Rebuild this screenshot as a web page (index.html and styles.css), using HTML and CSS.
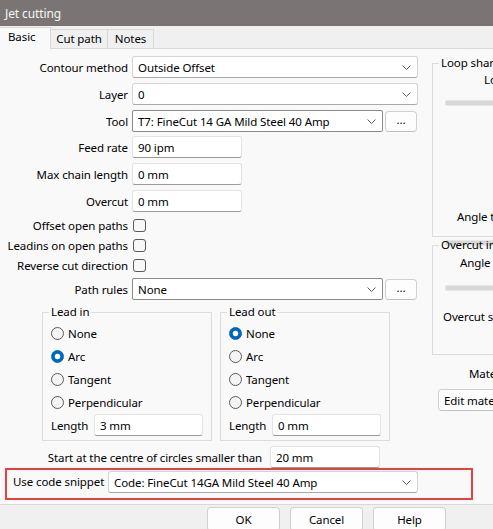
FILE: index.html
```html
<!DOCTYPE html>
<html>
<head>
<meta charset="utf-8">
<link rel="stylesheet" href="styles.css">
</head>
<body>
<div class="window">
  <div class="titlebar">Jet cutting</div>
  <div class="tabs">
    <div class="tab active">Basic</div>
    <div class="tab t2">Cut path</div>
    <div class="tab t3">Notes</div>
    <div class="tabfill"></div>
  </div>
  <div class="panel">
    <div class="top">
      <div class="leftcol">
        <div class="row">
          <span class="lbl">Contour method</span>
          <div class="field sel wide">Outside Offset<svg class="chev" width="9" height="5" viewBox="0 0 9 5"><path d="M0.5 0.5 L4.5 4.5 L8.5 0.5" fill="none" stroke="#5c5c5c"/></svg></div>
        </div>
        <div class="row">
          <span class="lbl">Layer</span>
          <div class="field sel wide">0<svg class="chev" width="9" height="5" viewBox="0 0 9 5"><path d="M0.5 0.5 L4.5 4.5 L8.5 0.5" fill="none" stroke="#5c5c5c"/></svg></div>
        </div>
        <div class="row r4">
          <span class="lbl">Tool</span>
          <div class="field sel combo mid">T7: FineCut 14 GA Mild Steel 40 Amp<svg class="chev" width="9" height="5" viewBox="0 0 9 5"><path d="M0.5 0.5 L4.5 4.5 L8.5 0.5" fill="none" stroke="#5c5c5c"/></svg></div>
          <div class="btn dots">...</div>
        </div>
        <div class="row">
          <span class="lbl">Feed rate</span>
          <div class="field inp">90 ipm</div>
        </div>
        <div class="row">
          <span class="lbl">Max chain length</span>
          <div class="field inp">0 mm</div>
        </div>
        <div class="row r3">
          <span class="lbl">Overcut</span>
          <div class="field inp">0 mm</div>
        </div>
        <div class="crow">
          <span class="lbl">Offset open paths</span>
          <span class="cb"></span>
        </div>
        <div class="crow">
          <span class="lbl">Leadins on open paths</span>
          <span class="cb"></span>
        </div>
        <div class="crow last">
          <span class="lbl">Reverse cut direction</span>
          <span class="cb"></span>
        </div>
        <div class="row r0">
          <span class="lbl">Path rules</span>
          <div class="field sel combo mid">None<svg class="chev" width="9" height="5" viewBox="0 0 9 5"><path d="M0.5 0.5 L4.5 4.5 L8.5 0.5" fill="none" stroke="#5c5c5c"/></svg></div>
          <div class="btn dots">...</div>
        </div>
        <div class="leads">
          <fieldset class="group lead">
            <legend>Lead in</legend>
            <div class="radio"><span class="rb"></span>None</div>
            <div class="radio"><span class="rb on"></span>Arc</div>
            <div class="radio"><span class="rb"></span>Tangent</div>
            <div class="radio"><span class="rb"></span>Perpendicular</div>
            <div class="lenrow"><span class="lenlbl">Length</span><div class="field inp len">3 mm</div></div>
          </fieldset>
          <fieldset class="group lead">
            <legend>Lead out</legend>
            <div class="radio"><span class="rb on"></span>None</div>
            <div class="radio"><span class="rb"></span>Arc</div>
            <div class="radio"><span class="rb"></span>Tangent</div>
            <div class="radio"><span class="rb"></span>Perpendicular</div>
            <div class="lenrow"><span class="lenlbl">Length</span><div class="field inp len">0 mm</div></div>
          </fieldset>
        </div>
      </div>
      <div class="rightcol">
        <fieldset class="group loop">
          <legend>Loop sharp corners</legend>
          <div class="rlbl l1">Loop angle</div>
          <div class="slider s1"></div>
          <div class="rlbl l2">Angle tolerance</div>
          <div class="slider s2"></div>
        </fieldset>
        <fieldset class="group over">
          <legend>Overcut in corners</legend>
          <div class="rlbl l3">Angle limit</div>
          <div class="slider s3"></div>
          <div class="rlbl l4">Overcut size</div>
        </fieldset>
        <div class="rlbl l5">Material</div>
        <div class="btn editbtn">Edit material...</div>
      </div>
    </div>
    <div class="startrow">
      <span class="startlbl">Start at the centre of circles smaller than</span>
      <div class="field inp">20 mm</div>
    </div>
    <div class="snippet">
      <span class="snlbl">Use code snippet</span>
      <div class="field sel snsel">Code: FineCut 14GA Mild Steel 40 Amp<svg class="chev" width="9" height="5" viewBox="0 0 9 5"><path d="M0.5 0.5 L4.5 4.5 L8.5 0.5" fill="none" stroke="#5c5c5c"/></svg></div>
    </div>
  </div>
  <div class="footer">
    <div class="btn fbtn">OK</div>
    <div class="btn fbtn">Cancel</div>
    <div class="btn fbtn">Help</div>
  </div>
</div>
</body>
</html>
```

FILE: styles.css
```css
html, body {
  margin: 0;
  padding: 0;
}
body {
  width: 493px;
  height: 529px;
  overflow: hidden;
  background: #f0f0f0;
  font-family: "Noto Sans", "Open Sans", sans-serif;
  font-size: 11.5px;
  letter-spacing: -0.1px;
  color: #000;
}
.window {
  width: 640px;
}
.titlebar {
  height: 26px;
  line-height: 27px;
  background: #7a7574;
  color: #f5f5f5;
  padding-left: 5px;
  box-sizing: border-box;
  font-size: 12px;
}
.tabs {
  display: flex;
  align-items: flex-end;
  height: 23px;
  background: #f0f0f0;
}
.tab {
  box-sizing: border-box;
  height: 20px;
  border-top: 1px solid #d9d9d9;
  border-right: 1px solid #d9d9d9;
  border-bottom: 1px solid #d9d9d9;
  display: flex;
  align-items: center;
  justify-content: center;
  line-height: 16px;
}
.tab.active {
  height: 22px;
  width: 51px;
  background: #f9f9f9;
  border-bottom: none;
  justify-content: flex-start;
  padding-left: 8px;
  padding-bottom: 4px;
}
.tab.t2 { width: 57px; }
.tab.t3 { width: 46px; }
.tabfill {
  flex: 1;
  border-bottom: 1px solid #d9d9d9;
}
.panel {
  background: #f9f9f9;
  border-bottom: 1px solid #d9d9d9;
  padding-bottom: 4px;
}
.top {
  display: flex;
}
.leftcol {
  width: 420px;
  flex: none;
  padding-top: 7px;
}
.row {
  display: flex;
  align-items: center;
  height: 22px;
  margin-bottom: 5px;
}
.row.r4 { margin-bottom: 4px; }
.row.r3 { margin-bottom: 3px; }
.row.r0 { margin-bottom: 0; }
.lbl {
  flex: none;
  width: 128px;
  margin-right: 4px;
  text-align: right;
  white-space: nowrap;
}
.field {
  box-sizing: border-box;
  height: 22px;
  background: #fff;
  border: 1px solid #e3e3e3;
  border-bottom-color: #9a9a9a;
  border-radius: 3px;
  padding-left: 5px;
  display: flex;
  align-items: center;
  white-space: nowrap;
  flex: none;
}
.sel {
  justify-content: space-between;
  padding-right: 6px;
  border-color: #d4d4d4;
  border-bottom-color: #a8a8a8;
}
.sel.combo {
  border-color: #8a8a8a;
  border-radius: 2px;
}
.wide { width: 286px; }
.mid { width: 251px; }
.inp { width: 110px; }
.chev { flex: none; }
.btn {
  box-sizing: border-box;
  background: #fdfdfd;
  border: 1px solid #d0d0d0;
  border-bottom-color: #c0c0c0;
  border-radius: 4px;
  display: flex;
  align-items: center;
  justify-content: center;
  white-space: nowrap;
  flex: none;
}
.dots {
  width: 32px;
  height: 21px;
  margin-left: 2px;
  padding-bottom: 3px;
}
.crow {
  display: flex;
  align-items: center;
  height: 20px;
}
.crow.last { margin-bottom: 3px; }
.cb {
  box-sizing: border-box;
  width: 13px;
  height: 13px;
  border: 1px solid #5a5a5a;
  border-radius: 3px;
  background: #f7f7f7;
  margin-left: 1px;
}
.leads {
  display: flex;
  gap: 8px;
  margin-left: 42px;
  margin-top: 4px;
}
.group {
  border: 1px solid #dcdcdc;
  margin: 0;
  padding: 0;
  min-width: 0;
  box-sizing: border-box;
}
.group legend {
  padding: 0 2px;
  margin-left: 6px;
  line-height: 16px;
  white-space: nowrap;
}
.lead {
  width: 170px;
  padding: 2px 0 4px 0;
}
.radio {
  display: flex;
  align-items: center;
  height: 23px;
  padding-left: 8px;
}
.rb {
  box-sizing: border-box;
  width: 13px;
  height: 13px;
  border-radius: 50%;
  border: 1px solid #5a5a5a;
  background: #f4f4f4;
  margin-right: 4px;
  flex: none;
}
.rb.on {
  border-color: #0067c0;
  background: radial-gradient(circle, #fff 0, #fff 2.4px, #0067c0 3.2px);
}
.lenrow {
  display: flex;
  align-items: center;
  height: 22px;
  padding-left: 8px;
}
.lenlbl {
  width: 43px;
  flex: none;
}
.len { width: 109px; }
.rightcol {
  margin-left: 12px;
  padding-top: 6px;
  width: 200px;
  flex: none;
}
.loop {
  width: 200px;
  height: 182px;
}
.over {
  width: 200px;
  height: 118px;
}
.rlbl {
  white-space: nowrap;
  line-height: 18px;
}
.l1 { margin-left: 51px; }
.l2 { margin-left: 24px; margin-top: 102px; }
.l3 { margin-left: 27px; margin-top: 1px; }
.l4 { margin-left: 10px; margin-top: 17px; }
.l5 { margin-left: 37px; margin-top: 10px; }
.slider {
  height: 4px;
  width: 120px;
  background: #d8d8d8;
  border: 1px solid #e6e6e6;
  border-radius: 2px;
  margin-left: 12px;
}
.s1 { margin-top: 11px; }
.s2 { margin-top: 14px; }
.s3 { margin-top: 13px; }
.editbtn {
  margin-left: 6px;
  margin-top: 6px;
  width: 110px;
  height: 22px;
  justify-content: flex-start;
  padding-left: 5px;
}
.startrow {
  display: flex;
  align-items: center;
  height: 22px;
  margin-top: 5px;
}
.startlbl {
  width: 262px;
  margin-right: 8px;
  text-align: right;
  white-space: nowrap;
  flex: none;
}
.snippet {
  box-sizing: border-box;
  margin-left: 5px;
  width: 468px;
  height: 32px;
  border: 2px solid #e8403f;
  display: flex;
  align-items: flex-start;
  padding: 1px 0 0 6px;
}
.snlbl {
  width: 95px;
  flex: none;
  line-height: 22px;
  white-space: nowrap;
}
.snsel { width: 310px; }
.footer {
  display: flex;
  gap: 10px;
  padding-left: 207px;
  padding-top: 2px;
}
.fbtn {
  width: 73px;
  height: 24px;
}
```
